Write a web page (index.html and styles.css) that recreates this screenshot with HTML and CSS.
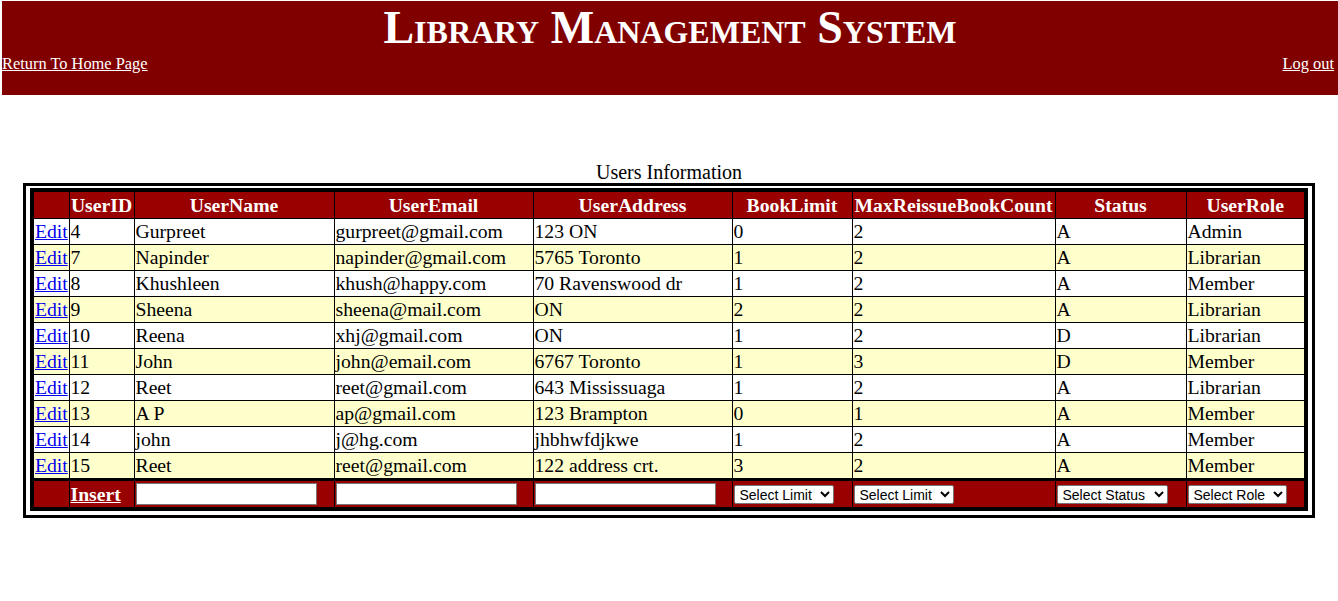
FILE: index.html
```
<!DOCTYPE html>
<html>
<head>
<meta charset="utf-8">
<title>Users Information</title>
<link rel="stylesheet" href="styles.css">
</head>
<body>
<div class="masthead">
  <h1 class="title">Library Management System</h1>
  <div class="nav">
    <a href="#">Return To Home Page</a>
    <a href="#">Log out</a>
  </div>
</div>

<div class="caption">Users Information</div>
<div class="frame">
  <table class="grid">
    <colgroup>
      <col class="c-edit"><col class="c-id"><col class="c-name"><col class="c-email"><col class="c-addr"><col class="c-limit"><col class="c-max"><col class="c-status"><col class="c-role">
    </colgroup>
    <thead>
      <tr class="head">
        <th></th><th>UserID</th><th>UserName</th><th>UserEmail</th><th>UserAddress</th><th>BookLimit</th><th>MaxReissueBookCount</th><th>Status</th><th>UserRole</th>
      </tr>
    </thead>
    <tbody>
      <tr><td><a href="#">Edit</a></td><td>4</td><td>Gurpreet</td><td>gurpreet@gmail.com</td><td>123 ON</td><td>0</td><td>2</td><td>A</td><td>Admin</td></tr>
      <tr class="alt"><td><a href="#">Edit</a></td><td>7</td><td>Napinder</td><td>napinder@gmail.com</td><td>5765 Toronto</td><td>1</td><td>2</td><td>A</td><td>Librarian</td></tr>
      <tr><td><a href="#">Edit</a></td><td>8</td><td>Khushleen</td><td>khush@happy.com</td><td>70 Ravenswood dr</td><td>1</td><td>2</td><td>A</td><td>Member</td></tr>
      <tr class="alt"><td><a href="#">Edit</a></td><td>9</td><td>Sheena</td><td>sheena@mail.com</td><td>ON</td><td>2</td><td>2</td><td>A</td><td>Librarian</td></tr>
      <tr><td><a href="#">Edit</a></td><td>10</td><td>Reena</td><td>xhj@gmail.com</td><td>ON</td><td>1</td><td>2</td><td>D</td><td>Librarian</td></tr>
      <tr class="alt"><td><a href="#">Edit</a></td><td>11</td><td>John</td><td>john@email.com</td><td>6767 Toronto</td><td>1</td><td>3</td><td>D</td><td>Member</td></tr>
      <tr><td><a href="#">Edit</a></td><td>12</td><td>Reet</td><td>reet@gmail.com</td><td>643 Mississuaga</td><td>1</td><td>2</td><td>A</td><td>Librarian</td></tr>
      <tr class="alt"><td><a href="#">Edit</a></td><td>13</td><td>A P</td><td>ap@gmail.com</td><td>123 Brampton</td><td>0</td><td>1</td><td>A</td><td>Member</td></tr>
      <tr><td><a href="#">Edit</a></td><td>14</td><td>john</td><td>j@hg.com</td><td>jhbhwfdjkwe</td><td>1</td><td>2</td><td>A</td><td>Member</td></tr>
      <tr class="alt"><td><a href="#">Edit</a></td><td>15</td><td>Reet</td><td>reet@gmail.com</td><td>122 address crt.</td><td>3</td><td>2</td><td>A</td><td>Member</td></tr>
    </tbody>
    <tfoot>
      <tr class="foot">
        <td></td>
        <td><a href="#" class="insert">Insert</a></td>
        <td><input type="text" class="field"></td>
        <td><input type="text" class="field"></td>
        <td><input type="text" class="field"></td>
        <td><select class="pick pick-limit"><option>Select Limit</option><option>1</option><option>2</option><option>3</option></select></td>
        <td><select class="pick pick-limit"><option>Select Limit</option><option>1</option><option>2</option><option>3</option></select></td>
        <td><select class="pick pick-status"><option>Select Status</option><option>A</option><option>D</option></select></td>
        <td><select class="pick pick-role"><option>Select Role</option><option>Admin</option><option>Librarian</option><option>Member</option></select></td>
      </tr>
    </tfoot>
  </table>
</div>
</body>
</html>
```
FILE: styles.css
```
html, body {
  margin: 0;
  padding: 0;
  background: #fff;
}

body {
  font-family: "Liberation Serif", "Times New Roman", serif;
  font-size: 16px;
  color: #000;
}

.masthead {
  background: #800000;
  color: #fff;
  margin: 1px 0 0 2px;
  height: 94px;
  box-sizing: border-box;
  padding-top: 6px;
}

.title {
  margin: 0;
  text-align: center;
  font-size: 46px;
  font-weight: bold;
  font-variant: small-caps;
  line-height: 42px;
}

.nav {
  display: flex;
  justify-content: space-between;
  padding-right: 4px;
  margin-top: 5px;
  font-size: 16.4px;
  line-height: 19px;
}

.nav a {
  color: #fff;
  text-decoration: underline;
}

.caption {
  text-align: center;
  font-size: 20px;
  line-height: 22px;
  margin-top: 66px;
  margin-bottom: 0;
}

.frame {
  width: fit-content;
  margin: 0 auto;
  border: 3px solid #000;
  padding: 2px 4px 4px 4px;
}

.grid {
  border-collapse: collapse;
  table-layout: fixed;
  border: 4px solid #000;
  font-size: 19.7px;
  width: 1278px;
}

.c-edit { width: 37px; }
.c-id { width: 65px; }
.c-name { width: 200px; }
.c-email { width: 199px; }
.c-addr { width: 199px; }
.c-limit { width: 120px; }
.c-max { width: 203px; }
.c-status { width: 131px; }
.c-role { width: 120px; }

.grid th,
.grid td {
  border: 1px solid #000;
  padding: 2px 1px;
  text-align: left;
  white-space: nowrap;
  overflow: hidden;
  line-height: 21px;
}

.grid .head th {
  background: #990000;
  color: #fff;
  font-weight: bold;
  text-align: center;
  line-height: 22px;
  padding: 2px 0;
}

.grid tbody tr {
  background: #fff;
}

.grid tbody tr.alt {
  background: #ffffcc;
}

.grid td a {
  color: #0000ee;
  text-decoration: underline;
}

.grid .foot td {
  background: #990000;
  border-top: 3px solid #000;
  padding: 2px 1px;
  line-height: 22px;
  vertical-align: middle;
}

.grid .foot td a.insert {
  color: #fff;
  font-weight: bold;
}

.field {
  display: block;
  width: 181px;
  height: 22px;
  box-sizing: border-box;
  border: 1px solid #767676;
  background: #fff;
  margin: 0;
  padding: 1px 2px;
  font: 13px "Liberation Sans", Arial, sans-serif;
}

.pick {
  display: block;
  height: 19px;
  box-sizing: border-box;
  border: 1px solid #767676;
  border-radius: 2px;
  background: #fff;
  color: #000;
  margin: 0;
  padding: 0 0 0 1px;
  font: 14px "Liberation Sans", Arial, sans-serif;
}

.pick-limit { width: 100px; }
.pick-status { width: 111px; }
.pick-role { width: 99px; }
```
